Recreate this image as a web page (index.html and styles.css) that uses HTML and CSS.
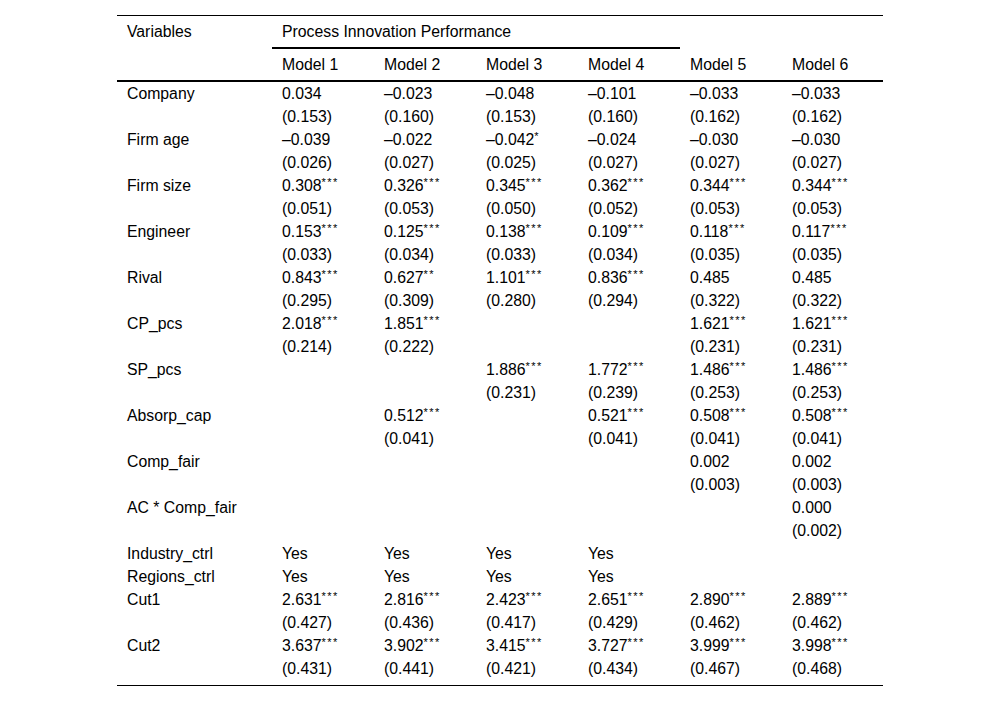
FILE: index.html
```html
<!DOCTYPE html>
<html lang="en">
<head>
<meta charset="utf-8">
<title>Process Innovation Performance</title>
<link rel="stylesheet" href="styles.css">
</head>
<body>
<table class="reg">
  <colgroup>
    <col class="c-var"><col class="c-m"><col class="c-m"><col class="c-m"><col class="c-m"><col class="c-m"><col class="c-last">
  </colgroup>
  <thead>
    <tr class="h1">
      <th class="var" rowspan="2">Variables</th>
      <th class="span" colspan="4">Process Innovation Performance</th>
      <th class="m56" rowspan="2">Model 5</th>
      <th class="m56" rowspan="2">Model 6</th>
    </tr>
    <tr class="h2">
      <th>Model 1</th><th>Model 2</th><th>Model 3</th><th>Model 4</th>
    </tr>
  </thead>
  <tbody>
    <tr><td>Company</td><td>0.034<br>(0.153)</td><td>–0.023<br>(0.160)</td><td>–0.048<br>(0.153)</td><td>–0.101<br>(0.160)</td><td>–0.033<br>(0.162)</td><td>–0.033<br>(0.162)</td></tr>
    <tr><td>Firm age</td><td>–0.039<br>(0.026)</td><td>–0.022<br>(0.027)</td><td>–0.042<sup>*</sup><br>(0.025)</td><td>–0.024<br>(0.027)</td><td>–0.030<br>(0.027)</td><td>–0.030<br>(0.027)</td></tr>
    <tr><td>Firm size</td><td>0.308<sup>***</sup><br>(0.051)</td><td>0.326<sup>***</sup><br>(0.053)</td><td>0.345<sup>***</sup><br>(0.050)</td><td>0.362<sup>***</sup><br>(0.052)</td><td>0.344<sup>***</sup><br>(0.053)</td><td>0.344<sup>***</sup><br>(0.053)</td></tr>
    <tr><td>Engineer</td><td>0.153<sup>***</sup><br>(0.033)</td><td>0.125<sup>***</sup><br>(0.034)</td><td>0.138<sup>***</sup><br>(0.033)</td><td>0.109<sup>***</sup><br>(0.034)</td><td>0.118<sup>***</sup><br>(0.035)</td><td>0.117<sup>***</sup><br>(0.035)</td></tr>
    <tr><td>Rival</td><td>0.843<sup>***</sup><br>(0.295)</td><td>0.627<sup>**</sup><br>(0.309)</td><td>1.101<sup>***</sup><br>(0.280)</td><td>0.836<sup>***</sup><br>(0.294)</td><td>0.485<br>(0.322)</td><td>0.485<br>(0.322)</td></tr>
    <tr><td>CP_pcs</td><td>2.018<sup>***</sup><br>(0.214)</td><td>1.851<sup>***</sup><br>(0.222)</td><td></td><td></td><td>1.621<sup>***</sup><br>(0.231)</td><td>1.621<sup>***</sup><br>(0.231)</td></tr>
    <tr><td>SP_pcs</td><td></td><td></td><td>1.886<sup>***</sup><br>(0.231)</td><td>1.772<sup>***</sup><br>(0.239)</td><td>1.486<sup>***</sup><br>(0.253)</td><td>1.486<sup>***</sup><br>(0.253)</td></tr>
    <tr><td>Absorp_cap</td><td></td><td>0.512<sup>***</sup><br>(0.041)</td><td></td><td>0.521<sup>***</sup><br>(0.041)</td><td>0.508<sup>***</sup><br>(0.041)</td><td>0.508<sup>***</sup><br>(0.041)</td></tr>
    <tr><td>Comp_fair</td><td></td><td></td><td></td><td></td><td>0.002<br>(0.003)</td><td>0.002<br>(0.003)</td></tr>
    <tr><td>AC * Comp_fair</td><td></td><td></td><td></td><td></td><td></td><td>0.000<br>(0.002)</td></tr>
    <tr><td>Industry_ctrl</td><td>Yes</td><td>Yes</td><td>Yes</td><td>Yes</td><td></td><td></td></tr>
    <tr><td>Regions_ctrl</td><td>Yes</td><td>Yes</td><td>Yes</td><td>Yes</td><td></td><td></td></tr>
    <tr><td>Cut1</td><td>2.631<sup>***</sup><br>(0.427)</td><td>2.816<sup>***</sup><br>(0.436)</td><td>2.423<sup>***</sup><br>(0.417)</td><td>2.651<sup>***</sup><br>(0.429)</td><td>2.890<sup>***</sup><br>(0.462)</td><td>2.889<sup>***</sup><br>(0.462)</td></tr>
    <tr class="last"><td>Cut2</td><td>3.637<sup>***</sup><br>(0.431)</td><td>3.902<sup>***</sup><br>(0.441)</td><td>3.415<sup>***</sup><br>(0.421)</td><td>3.727<sup>***</sup><br>(0.434)</td><td>3.999<sup>***</sup><br>(0.467)</td><td>3.998<sup>***</sup><br>(0.468)</td></tr>
  </tbody>
</table>
</body>
</html>
```
FILE: styles.css
```css
html, body {
  margin: 0;
  padding: 0;
  background: #fff;
}

body {
  font-family: "Liberation Sans", Arial, sans-serif;
  font-size: 15.8px;
  color: #000;
}

.reg {
  margin: 15px auto 0;
  width: 766px;
  table-layout: fixed;
  border-collapse: separate;
  border-spacing: 0;
  border-top: 1px solid #000;
}

.c-var { width: 155px; }
.c-m { width: 102px; }
.c-last { width: 101px; }

.reg th,
.reg td {
  text-align: left;
  font-weight: normal;
  vertical-align: top;
  line-height: 23px;
  padding: 0 0 0 10px;
  white-space: nowrap;
}

.reg thead th {
  padding-top: 4px;
  padding-bottom: 4px;
}

.reg th.span {
  border-bottom: 2px solid #000;
}

.reg th.var,
.reg th.m56,
.reg .h2 th {
  border-bottom: 2px solid #000;
}

.reg th.m56 {
  vertical-align: bottom;
}

.reg sup {
  font-size: 11px;
  line-height: 0;
  letter-spacing: 1.5px;
  vertical-align: 5px;
}

.reg tr.last td {
  padding-bottom: 5px;
  border-bottom: 1px solid #000;
}
```
